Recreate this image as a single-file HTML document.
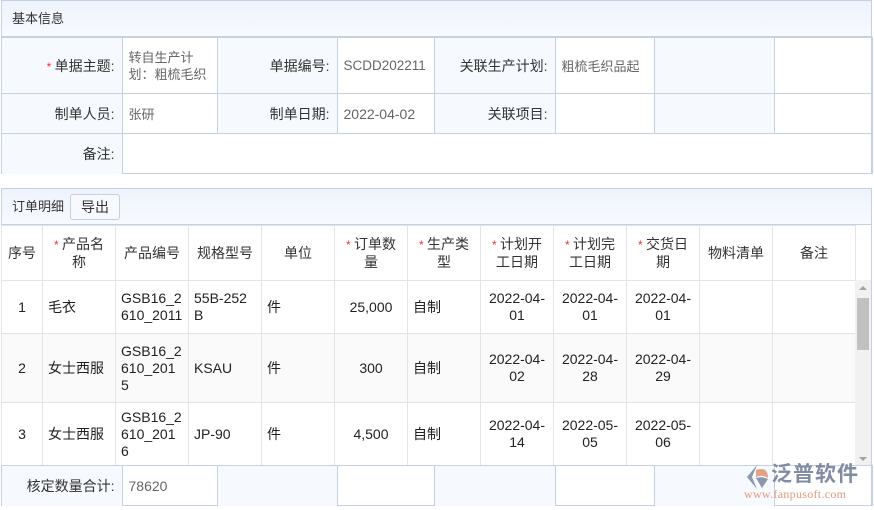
<!DOCTYPE html>
<html><head><meta charset="utf-8"><style>
*{box-sizing:border-box;margin:0;padding:0}
body{width:874px;height:510px;background:#fff;font-family:"Liberation Sans","Noto Sans CJK SC",sans-serif;font-size:13px;color:#333;position:relative;overflow:hidden}
.panel{position:absolute;left:1px;width:871px;border:1px solid #c5d0e0}
.hd{height:36px;background:linear-gradient(#eef3fb,#f7faff);line-height:36px;padding-left:10px;color:#333;border-bottom:1px solid #c5d0e0}
table{border-collapse:collapse;table-layout:fixed}
.f td{border:1px solid #c5d0e0;padding:0 6px;vertical-align:middle}
.f td.l{background:#f6f9fd;text-align:right;padding-right:7px;font-size:14px;white-space:nowrap}
.f td.v{color:#666}
.f tr td:first-child{border-left:none}
.f tr:last-child td{border-bottom:none}
.r{color:#e33;font-size:12px}
.d td{border:1px solid #e2e4e8;padding:0 5px;line-height:17px;vertical-align:middle;color:#222;font-size:14px;word-break:break-all}
.d th{border:1px solid #e2e4e8;font-weight:normal;line-height:17px;color:#333;padding:0 7px;font-size:14px}
.btn{display:inline-block;height:26px;line-height:24px;padding:0 10px;border:1px solid #c5d0e0;border-radius:3px;background:#f7f9fc;margin-left:6px;vertical-align:middle;position:relative;top:-1px;font-size:14px}
</style></head><body>
<div class="panel" style="top:0;height:174px">
<div class="hd">基本信息</div>
<table class="f" style="width:870px">
<colgroup><col style="width:120px"><col style="width:95px"><col style="width:120px"><col style="width:97px"><col style="width:121px"><col style="width:99px"><col style="width:120px"><col style="width:98px"></colgroup>
<tr style="height:56px"><td class="l"><span class="r">* </span>单据主题:</td><td class="v" style="line-height:17px">转自生产计划：粗梳毛织</td><td class="l">单据编号:</td><td class="v" style="font-size:13.5px">SCDD202211</td><td class="l">关联生产计划:</td><td class="v" style="white-space:nowrap">粗梳毛织品起</td><td class="l"></td><td></td></tr>
<tr style="height:40px"><td class="l">制单人员:</td><td class="v">张研</td><td class="l">制单日期:</td><td class="v" style="font-size:14px">2022-04-02</td><td class="l">关联项目:</td><td class="v"></td><td class="l"></td><td></td></tr>
<tr style="height:40px"><td class="l">备注:</td><td colspan="7"></td></tr>
</table>
</div>

<div class="panel" style="top:188px;height:318px">
<div class="hd">订单明细<span class="btn">导出</span></div>
<table class="d" style="width:854px;position:absolute;left:-1px;top:36px">
<colgroup><col style="width:41px"><col style="width:73px"><col style="width:73px"><col style="width:73px"><col style="width:73px"><col style="width:73px"><col style="width:73px"><col style="width:73px"><col style="width:73px"><col style="width:73px"><col style="width:73px"><col style="width:83px"></colgroup>
<tr style="height:55px"><th style="padding:0 2px">序号</th><th><span class="r">* </span>产品名称</th><th style="padding:0 4px">产品编号</th><th style="padding:0 4px">规格型号</th><th>单位</th><th><span class="r">* </span>订单数量</th><th><span class="r">* </span>生产类型</th><th><span class="r">* </span>计划开工日期</th><th><span class="r">* </span>计划完工日期</th><th><span class="r">* </span>交货日期</th><th style="padding:0 4px">物料清单</th><th>备注</th></tr>
<tr style="height:53px"><td style="text-align:center">1</td><td>毛衣</td><td>GSB16_2610_2011</td><td>55B-252B</td><td>件</td><td style="text-align:center">25,000</td><td>自制</td><td style="text-align:center">2022-04-01</td><td style="text-align:center">2022-04-01</td><td style="text-align:center">2022-04-01</td><td></td><td></td></tr>
<tr style="height:69px;background:#fafafa"><td style="text-align:center">2</td><td>女士西服</td><td>GSB16_2610_2015</td><td>KSAU</td><td>件</td><td style="text-align:center">300</td><td>自制</td><td style="text-align:center">2022-04-02</td><td style="text-align:center">2022-04-28</td><td style="text-align:center">2022-04-29</td><td></td><td></td></tr>
<tr style="height:63px"><td style="text-align:center">3</td><td>女士西服</td><td>GSB16_2610_2016</td><td>JP-90</td><td>件</td><td style="text-align:center">4,500</td><td>自制</td><td style="text-align:center">2022-04-14</td><td style="text-align:center">2022-05-05</td><td style="text-align:center">2022-05-06</td><td></td><td></td></tr>
</table>
<div style="position:absolute;left:853px;top:91px;width:16px;height:186px;background:#f1f1f1">
<div style="position:absolute;left:4px;top:6px;border:4px solid transparent;border-bottom:4px solid #a3a3a3;border-top:none"></div>
<div style="position:absolute;left:2px;top:18px;width:12px;height:52px;background:#c1c1c1"></div>
<div style="position:absolute;left:4px;bottom:5px;border:4px solid transparent;border-top:4px solid #a3a3a3;border-bottom:none"></div>
</div>
<table class="f" style="width:870px;position:absolute;left:0;top:276px">
<colgroup><col style="width:120px"><col style="width:95px"><col style="width:120px"><col style="width:97px"><col style="width:121px"><col style="width:99px"><col style="width:120px"><col style="width:98px"></colgroup>
<tr style="height:40px"><td class="l">核定数量合计:</td><td class="v" style="font-size:14px">78620</td><td class="l"></td><td></td><td class="l"></td><td></td><td class="l"></td><td></td></tr>
</table>
</div>
<div style="position:absolute;left:744px;top:462px;width:122px;height:40px">
<svg width="26" height="26" viewBox="0 0 26 26" style="position:absolute;left:0;top:2px"><path d="M13 1 L3 13 L13 25 L8 13 Z" fill="#8a97ad"/><path d="M12 6 Q24 2 24 14 Q18 10 12 13 Z" fill="#e3a185"/><path d="M12 14 Q18 12 24 15 L18 24 Z" fill="#8a97ad"/></svg>
<div style="position:absolute;left:27px;top:0;font-size:21px;line-height:26px;color:#7f8ca3;letter-spacing:1px;font-weight:bold">泛普软件</div>
<div style="position:absolute;left:0;top:25px;font-family:'Liberation Serif',serif;font-size:12px;color:#e09a80;letter-spacing:0.3px">www.fanpusoft.com</div>
</div>
</body></html>
